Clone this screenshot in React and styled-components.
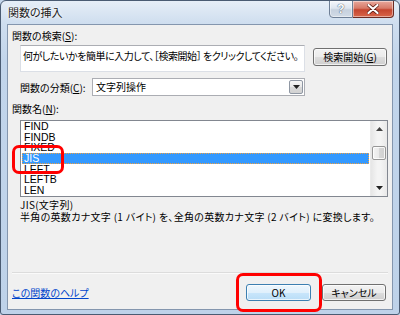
import React from "react";
import styled, { createGlobalStyle } from "styled-components";

const UI_FONT = `"Noto Sans CJK JP", "Liberation Sans", sans-serif`;

const GlobalStyle = createGlobalStyle`
  html, body {
    margin: 0;
    padding: 0;
    background: #c4d6eb;
  }
  body {
    font-family: ${UI_FONT};
    font-feature-settings: "palt" 1;
  }
`;

const Window = styled.div`
  position: relative;
  box-sizing: border-box;
  width: 400px;
  height: 315px;
  border: 1px solid #4a5b72;
  border-radius: 6px 6px 3px 3px;
  background: linear-gradient(#e6eef7 0px, #cfdeef 22px, #c2d5eb 60px, #bed2e9 100%);
  display: flex;
  flex-direction: column;
  overflow: hidden;
`;

const TitleBar = styled.div`
  height: 23px;
  display: flex;
  align-items: flex-start;
  justify-content: space-between;
  padding: 0 5px 0 7px;
`;

const Title = styled.div`
  margin-top: 5px;
  font-size: 11px;
  line-height: 13px;
  color: #1a1a1a;
  text-shadow: 0 0 4px #ffffff, 0 0 2px #ffffff;
`;

const CaptionButtons = styled.div`
  display: flex;
  margin-top: -1px;
`;

const CaptionButton = styled.div`
  box-sizing: border-box;
  width: ${(p) => p.$w}px;
  height: 18px;
  display: flex;
  align-items: center;
  justify-content: center;
  border: 1px solid ${(p) => (p.$close ? "#6b2a22" : "#6e7f96")};
  border-left-width: ${(p) => (p.$close ? 0 : 1)}px;
  border-radius: ${(p) => (p.$close ? "0 0 4px 0" : "0 0 0 4px")};
  background: ${(p) =>
    p.$close
      ? "linear-gradient(#e8a89c 0%, #d77a68 45%, #c5452f 55%, #d8664a 100%)"
      : "linear-gradient(#f4f7fb 0%, #dde5ef 45%, #c6d1de 55%, #d2dbe6 100%)"};
  box-shadow: inset 0 0 0 1px rgba(255, 255, 255, 0.45);
  font-family: "Liberation Sans", sans-serif;
  font-size: 12px;
  font-weight: bold;
  color: #ffffff;
  text-shadow: 0 0 1px #44546a, 0 0 1px #44546a;
`;

const Client = styled.div`
  flex: 1;
  margin: 0 6px 4px 6px;
  border: 1px solid #8496ae;
  background: #f0f0f0;
  display: flex;
  flex-direction: column;
  font-size: 10px;
  color: #000;
`;

const SectionLabel = styled.div`
  margin: ${(p) => p.$top}px 0 0 4px;
  height: 13px;
  line-height: 13px;
  font-size: 10px;
`;

const SearchRow = styled.div`
  display: flex;
  align-items: flex-start;
  margin: 3px 0 0 12px;
`;

const SearchBox = styled.div`
  box-sizing: border-box;
  width: 285px;
  height: 27px;
  background: #fff;
  border: 1px solid #dbdfe6;
  border-top-color: #abadb3;
  padding: 3px 2px;
  line-height: 13px;
  font-size: 10px;
  letter-spacing: -0.45px;
  white-space: nowrap;
  overflow: hidden;
`;

const PushButton = styled.div`
  box-sizing: border-box;
  width: ${(p) => p.$w}px;
  height: ${(p) => p.$h}px;
  margin: ${(p) => p.$m || 0};
  display: flex;
  align-items: center;
  justify-content: center;
  border: 1px solid ${(p) => (p.$focus ? "#3c7fb1" : "#707070")};
  border-radius: 3px;
  background: ${(p) =>
    p.$focus
      ? "linear-gradient(#eef7fd 0%, #e0f0fc 50%, #c9e6fb 51%, #b9ddf7 100%)"
      : "linear-gradient(#f2f2f2 0%, #ebebeb 50%, #dddddd 51%, #cfcfcf 100%)"};
  box-shadow: inset 0 0 0 1px rgba(255, 255, 255, 0.7);
  font-size: 10px;
  line-height: 12px;
`;

const CategoryRow = styled.div`
  display: flex;
  align-items: center;
  margin: 6px 0 0 12px;
`;

const CategoryLabel = styled.div`
  width: 72px;
  font-size: 10px;
`;

const Combo = styled.div`
  box-sizing: border-box;
  width: 213px;
  height: 18px;
  display: flex;
  align-items: stretch;
  background: #fff;
  border: 1px solid #abadb3;
`;

const ComboText = styled.div`
  flex: 1;
  padding-left: 3px;
  line-height: 16px;
  font-size: 10px;
`;

const ComboArrow = styled.div`
  box-sizing: border-box;
  width: 14px;
  margin: 1px;
  display: flex;
  align-items: center;
  justify-content: center;
  border: 1px solid #8f97a3;
  border-radius: 2px;
  background: linear-gradient(#f6f6f6 0%, #e8e8e8 50%, #d9d9d9 51%, #d2d2d2 100%);
`;

const ListBox = styled.div`
  box-sizing: border-box;
  width: 368px;
  height: 77px;
  margin: 5px 0 0 12px;
  border: 1px solid #828790;
  background: #fff;
  display: flex;
  overflow: hidden;
`;

const ListItems = styled.div`
  flex: 1;
  padding: 0 1px;
  overflow: hidden;
`;

const ListItem = styled.div`
  box-sizing: border-box;
  height: 10.7px;
  line-height: 10.7px;
  padding-left: 2px;
  font-family: "Liberation Sans", sans-serif;
  font-size: 10.5px;
  color: ${(p) => (p.$selected ? "#fff" : "#000")};
  background: ${(p) => (p.$selected ? "#3399ff" : "transparent")};
  outline: ${(p) => (p.$selected ? "1px dotted #f0a040" : "none")};
  outline-offset: -1px;
`;

const ScrollBar = styled.div`
  width: 16px;
  display: flex;
  flex-direction: column;
  align-items: center;
  background: linear-gradient(90deg, #e6e6e6, #f4f4f4 40%, #f4f4f4 60%, #e9e9e9);
  border-left: 1px solid #eaeaea;
`;

const ScrollArrow = styled.div`
  height: 16px;
  display: flex;
  align-items: center;
  justify-content: center;
`;

const ScrollThumb = styled.div`
  box-sizing: border-box;
  width: 14px;
  height: 14px;
  margin-top: 9px;
  border: 1px solid #979797;
  border-radius: 2px;
  background: linear-gradient(90deg, #f3f3f3, #e9e9e9 50%, #d7d7d7 51%, #cfcfcf);
  box-shadow: inset 0 0 0 1px rgba(255, 255, 255, 0.8);
`;

const ScrollGap = styled.div`
  flex: 1;
`;

const Description = styled.div`
  margin: 2px 0 0 12px;
  font-size: 10px;
  line-height: 12px;
  letter-spacing: 0.3px;
`;

const Spacer = styled.div`
  flex: 1;
`;

const Separator = styled.div`
  margin: 0 4px;
  height: 1px;
  background: #dcdcdc;
  border-bottom: 1px solid #fafafa;
`;

const Footer = styled.div`
  display: flex;
  align-items: center;
  padding: 10px 6px 8px 4px;
`;

const HelpLink = styled.a`
  flex: 1;
  color: #0044cc;
  text-decoration: underline;
  font-size: 10px;
  cursor: pointer;
`;

const Annotation = styled.div`
  position: absolute;
  box-sizing: border-box;
  left: ${(p) => p.$x}px;
  top: ${(p) => p.$y}px;
  width: ${(p) => p.$w}px;
  height: ${(p) => p.$h}px;
  border: 3px solid #ff0000;
  border-radius: 7px;
  pointer-events: none;
`;

const functions = ["FIND", "FINDB", "FIXED", "JIS", "LEFT", "LEFTB", "LEN"];

function Triangle({ down }) {
  return (
    <svg width="7" height="4" viewBox="0 0 7 4">
      <path d={down ? "M0 0H7L3.5 4Z" : "M0 4H7L3.5 0Z"} fill={down ? "#222" : "#444"} />
    </svg>
  );
}

export default function App() {
  return (
    <>
      <GlobalStyle />
      <Window>
        <TitleBar>
          <Title>関数の挿入</Title>
          <CaptionButtons>
            <CaptionButton $w={24}>?</CaptionButton>
            <CaptionButton $w={41} $close>
              <svg width="12" height="10" viewBox="0 0 12 10">
                <path
                  d="M1.5 1L10.5 9M10.5 1L1.5 9"
                  stroke="#5a1a12"
                  strokeWidth="3.6"
                  strokeLinecap="round"
                />
                <path
                  d="M1.5 1L10.5 9M10.5 1L1.5 9"
                  stroke="#ffffff"
                  strokeWidth="2.2"
                  strokeLinecap="round"
                />
              </svg>
            </CaptionButton>
          </CaptionButtons>
        </TitleBar>

        <Client>
          <SectionLabel $top={4}>
            関数の検索(<u>S</u>):
          </SectionLabel>
          <SearchRow>
            <SearchBox>何がしたいかを簡単に入力して、［検索開始］ をクリックしてください。</SearchBox>
            <PushButton $w={74} $h={18} $m="3px 0 0 8px">
              検索開始(<u>G</u>)
            </PushButton>
          </SearchRow>

          <CategoryRow>
            <CategoryLabel>
              関数の分類(<u>C</u>):
            </CategoryLabel>
            <Combo>
              <ComboText>文字列操作</ComboText>
              <ComboArrow>
                <Triangle down />
              </ComboArrow>
            </Combo>
          </CategoryRow>

          <SectionLabel $top={6}>
            関数名(<u>N</u>):
          </SectionLabel>
          <ListBox>
            <ListItems>
              {functions.map((name) => (
                <ListItem key={name} $selected={name === "JIS"}>
                  {name}
                </ListItem>
              ))}
            </ListItems>
            <ScrollBar>
              <ScrollArrow>
                <Triangle />
              </ScrollArrow>
              <ScrollThumb />
              <ScrollGap />
              <ScrollArrow>
                <Triangle down />
              </ScrollArrow>
            </ScrollBar>
          </ListBox>

          <Description>
            JIS(文字列)
            <br />
            半角の英数カナ文字 (1 バイト) を、全角の英数カナ文字 (2 バイト) に変換します。
          </Description>

          <Spacer />
          <Separator />
          <Footer>
            <HelpLink>この関数のヘルプ</HelpLink>
            <PushButton $w={65} $h={17} $focus>
              OK
            </PushButton>
            <PushButton $w={64} $h={17} $m="0 0 0 11px">
              キャンセル
            </PushButton>
          </Footer>
        </Client>

        <Annotation $x={11} $y={144} $w={52} $h={29} />
        <Annotation $x={235} $y={272} $w={86} $h={39} />
      </Window>
    </>
  );
}
